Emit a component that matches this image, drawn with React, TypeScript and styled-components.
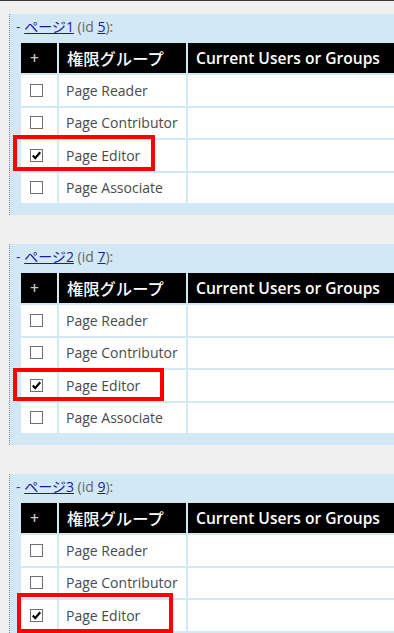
import styled, { createGlobalStyle } from "styled-components";

const GlobalStyle = createGlobalStyle`
  html, body {
    margin: 0;
    padding: 0;
    background: #f0f0f0;
    overflow: hidden;
    font-family: "Open Sans", "Noto Sans CJK JP", sans-serif;
  }
`;

type PanelType = {
  title: string;
  id: number;
  mark: { left: number; top: number; width: number; height: number };
};

// red boxes are hand drawn annotations, so each one sits a bit differently
const panels: PanelType[] = [
  { title: "ページ1", id: 5, mark: { left: 3, top: 121, width: 142, height: 36 } },
  { title: "ページ2", id: 7, mark: { left: 3, top: 124, width: 151, height: 33 } },
  { title: "ページ3", id: 9, mark: { left: 7, top: 119, width: 156, height: 40 } },
];

const groups = [
  { name: "Page Reader", checked: false },
  { name: "Page Contributor", checked: false },
  { name: "Page Editor", checked: true },
  { name: "Page Associate", checked: false },
];

const Check = ({ checked }: { checked: boolean }) => (
  <Box>
    {checked && (
      <svg width="11" height="11" viewBox="0 0 11 11">
        <path d="M1.8 5.6 L4.2 8.2 L9.2 2.3" fill="none" stroke="#000" strokeWidth="2.2" />
      </svg>
    )}
  </Box>
);

export default function App() {
  return (
    <Page>
      <GlobalStyle />
      {panels.map(p => (
        <Panel key={p.id}>
          <Heading>
            <Dash>-</Dash> <Link>{p.title}</Link> (id <Link>{p.id}</Link>):
          </Heading>
          <Grid>
            <HeadCell $dim>+</HeadCell>
            <HeadCell $cjk>権限グループ</HeadCell>
            <HeadCell>Current Users or Groups</HeadCell>
            {groups.map(g => (
              <Row key={g.name}>
                <Cell $box>
                  <Check checked={g.checked} />
                </Cell>
                <Cell>{g.name}</Cell>
                <Cell />
              </Row>
            ))}
          </Grid>
          <Mark
            style={{
              left: p.mark.left,
              top: p.mark.top,
              width: p.mark.width,
              height: p.mark.height,
            }}
          />
        </Panel>
      ))}
    </Page>
  );
}

const Page = styled.div`
  border-top: 1px solid #3a3a3a;
  padding-top: 13px;
  width: 600px;
`;

const Panel = styled.div`
  position: relative;
  margin: 0 0 29px 9px;
  padding: 3px 0 10px 6px;
  background: #d2e9f5;
  border-left: 1px dotted #8a8a8a;
`;

const Heading = styled.div`
  height: 20px;
  line-height: 20px;
  margin-bottom: 4px;
  font-size: 14px;
  color: #666;
`;

const Dash = styled.span`
  color: #2a3f9a;
`;

const Link = styled.a`
  color: #1a1aa6;
  text-decoration: underline;
  cursor: pointer;
`;

const Grid = styled.div`
  display: grid;
  grid-template-columns: 36px 127px 380px;
  grid-template-rows: 30px repeat(4, 30.5px);
  gap: 2px;
  padding: 2px;
  margin-left: 3px;
  width: max-content;
`;

const Row = styled.div`
  display: contents;
`;

const HeadCell = styled.div<{ $cjk?: boolean; $dim?: boolean }>`
  display: flex;
  align-items: center;
  padding-left: ${p => (p.$dim ? "9px" : "8px")};
  background: #000;
  color: ${p => (p.$dim ? "#c8c8c8" : "#fff")};
  font-size: ${p => (p.$cjk ? "16.3px" : "15.6px")};
  font-weight: ${p => (p.$cjk ? 500 : 600)};
`;

const Cell = styled.div<{ $box?: boolean }>`
  display: flex;
  align-items: center;
  padding-left: ${p => (p.$box ? "9px" : "7px")};
  background: #fff;
  color: #4a4a4a;
  font-size: 14px;
`;

const Box = styled.span`
  display: flex;
  align-items: center;
  justify-content: center;
  width: 13px;
  height: 13px;
  box-sizing: border-box;
  border: 1px solid #707070;
  background: #fff;
`;

const Mark = styled.div`
  position: absolute;
  box-sizing: border-box;
  border: 4px solid #ff0000;
  pointer-events: none;
`;
